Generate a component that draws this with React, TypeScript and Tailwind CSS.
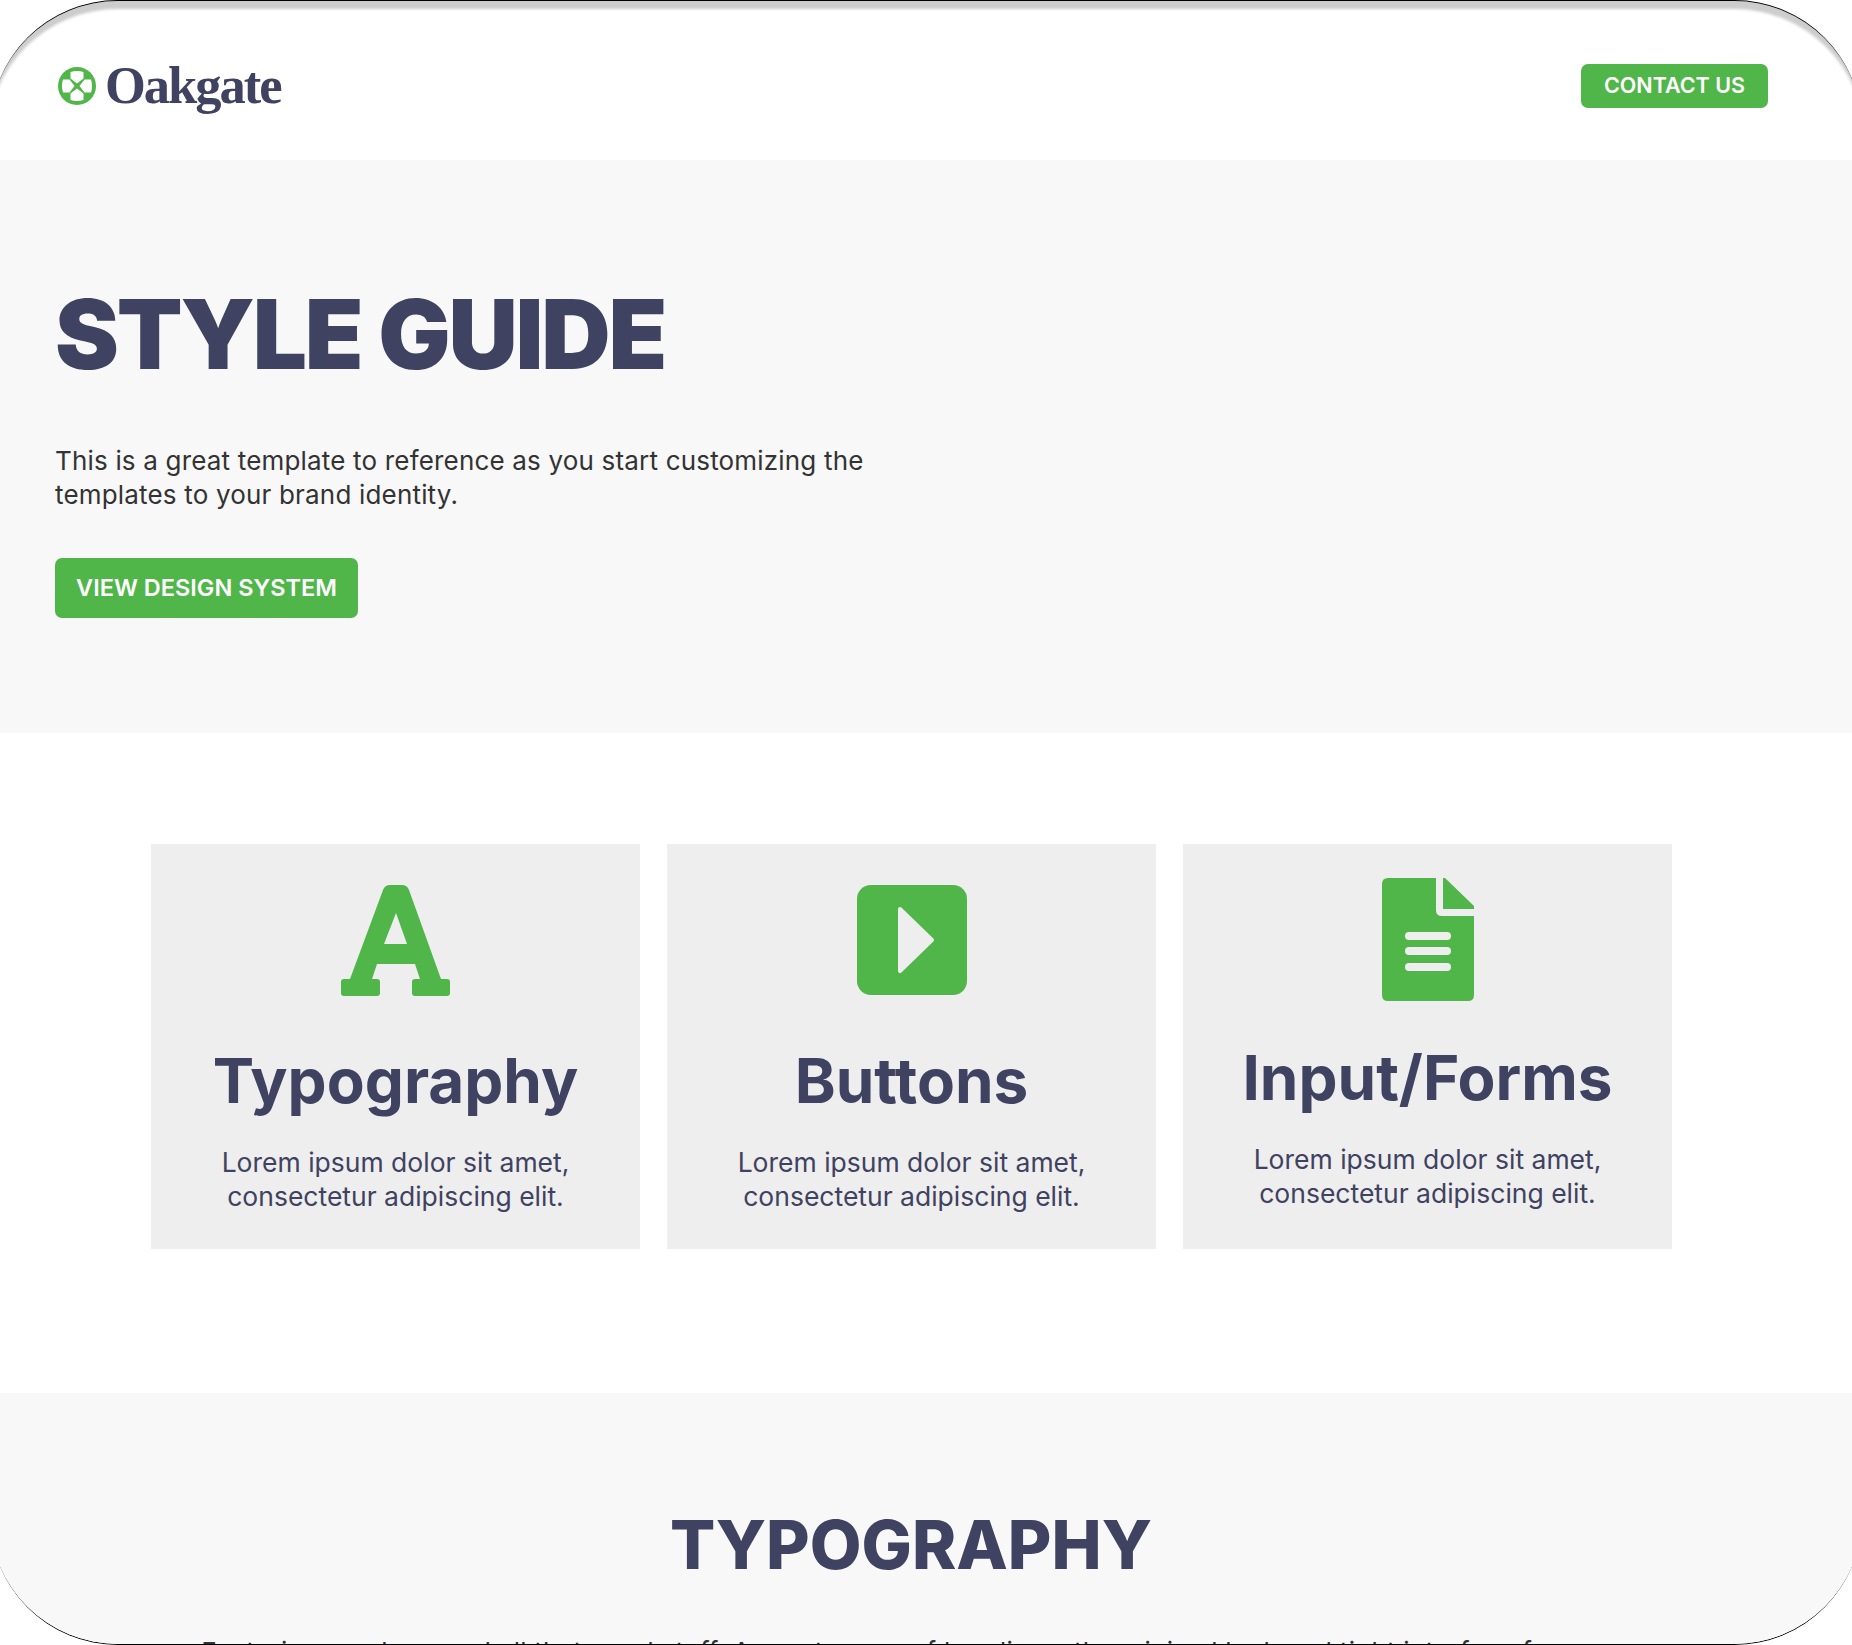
const cards = [
  { title: 'Typography', icon: <LetterIcon />, shift: false },
  { title: 'Buttons', icon: <PlayIcon />, shift: false },
  { title: 'Input/Forms', icon: <DocIcon />, shift: true },
];

function LogoMark() {
  return (
    <svg viewBox="0 0 38 38" className="h-[38px] w-[38px] shrink-0">
      <circle cx="19" cy="19" r="19" fill="#50b649" />
      {[0, 90, 180, 270].map((deg) => (
        <path
          key={deg}
          d="M12.5 5 Q19 3 25.5 5 V11.5 L19 16.5 L12.5 11.5 Z"
          fill="#fff"
          transform={`rotate(${deg} 19 19)`}
        />
      ))}
    </svg>
  );
}

function LetterIcon() {
  return (
    <svg viewBox="0 0 110 111" className="h-[111px] w-[110px]">
      <path
        fillRule="evenodd"
        fill="#50b649"
        d="M49 0 H61 Q66 0 68 5 L100 94 H106 Q109 94 109 97 V108 Q109 111 106 111 H74 Q71 111 71 108 V97 Q71 94 74 94 H79 L74 79 H36 L31 94 H36 Q39 94 39 97 V108 Q39 111 36 111 H3 Q0 111 0 108 V97 Q0 94 3 94 H9 L42 5 Q44 0 49 0 Z M55 28 L43 59 H66 Z"
      />
    </svg>
  );
}

function PlayIcon() {
  return (
    <svg viewBox="0 0 110 110" className="h-[110px] w-[110px]">
      <rect width="110" height="110" rx="14" fill="#50b649" />
      <path d="M43 24 L75 55 L43 86 Z" fill="#eeeeee" stroke="#eeeeee" strokeWidth="4" strokeLinejoin="round" />
    </svg>
  );
}

function DocIcon() {
  return (
    <svg viewBox="0 0 92 123" className="h-[123px] w-[92px]">
      <path
        fill="#50b649"
        d="M6 0 H54 V32 Q54 38 60 38 H92 V117 Q92 123 86 123 H6 Q0 123 0 117 V6 Q0 0 6 0 Z"
      />
      <path fill="#50b649" d="M61 0 H63 L92 28 V31 H61 Z" />
      <rect x="23" y="54" width="46" height="8" rx="4" fill="#eeeeee" />
      <rect x="23" y="69" width="46" height="8" rx="4" fill="#eeeeee" />
      <rect x="23" y="85" width="46" height="8" rx="4" fill="#eeeeee" />
    </svg>
  );
}

export default function App() {
  return (
    <div className="h-[1645px] w-[1852px] overflow-hidden bg-white">
      <div className="-ml-[10px] h-[1645px] w-[1872px] overflow-hidden rounded-[128px] border-y border-black bg-white font-[Inter,sans-serif] text-[#3f4260] shadow-[inset_0_10px_3px_-2px_#cdcdcd]">
        <header className="flex h-[159px] items-center justify-between pl-[68px] pr-[94px] pt-[10px]">
          <div className="flex items-center gap-[9px]">
            <LogoMark />
            <span className="font-['Liberation_Serif',serif] text-[52.5px] font-bold leading-none tracking-[-2px]">
              Oakgate
            </span>
          </div>
          <button className="flex h-[44px] w-[187px] items-center justify-center rounded-[7px] bg-[#50b649] text-[21.5px] font-semibold text-white">
            CONTACT US
          </button>
        </header>

        <section className="h-[573px] bg-[#f8f8f8] pl-[65px] pt-[114px]">
          <h1 className="text-[96px] font-black leading-[120px] tracking-[-2.2px]">STYLE GUIDE</h1>
          <p className="mt-[50px] text-[26px] leading-[34px] tracking-[0.18px] text-[#333333]">
            This is a great template to reference as you start customizing the
            <br />
            templates to your brand identity.
          </p>
          <button className="mt-[46px] flex h-[60px] w-[303px] items-center justify-center rounded-[7px] bg-[#50b649] text-[23.5px] font-semibold text-white">
            VIEW DESIGN SYSTEM
          </button>
        </section>

        <section className="flex h-[660px] gap-[27px] pl-[161px] pt-[111px]">
          {cards.map((card) => (
            <div key={card.title} className="flex h-[405px] w-[489px] flex-col items-center bg-[#eeeeee]">
              <div className={`flex h-[192px] shrink-0 items-center justify-center ${card.shift ? 'pb-[2px]' : ''}`}>{card.icon}</div>
              <h3 className={`text-[62px] font-bold leading-[70px] ${card.shift ? 'mt-[7px]' : 'mt-[10px]'}`}>{card.title}</h3>
              <p className="mt-[29px] text-center text-[26.5px] leading-[34px]">
                Lorem ipsum dolor sit amet,
                <br />
                consectetur adipiscing elit.
              </p>
            </div>
          ))}
        </section>

        <section className="h-[252px] bg-[#f8f8f8] pr-[30px] pt-[110px] text-center">
          <h2 className="text-[67px] font-extrabold leading-[84px]">TYPOGRAPHY</h2>
          <p className="mt-[48px] text-[26px] leading-[34px] tracking-[0.26px] text-[#333333]">
            Featuring numbers and all that good stuff. A great range of headings, the minimal look and tight interface for your
          </p>
        </section>
      </div>
    </div>
  );
}
